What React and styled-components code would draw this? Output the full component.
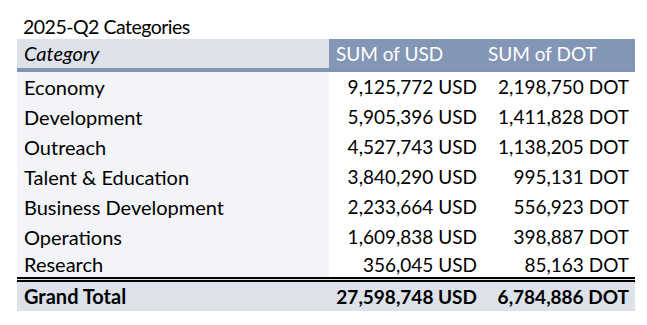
import styled, { createGlobalStyle } from "styled-components";

const GlobalStyle = createGlobalStyle`
  body {
    margin: 0;
    background: #ffffff;
    font-family: Lato, "Open Sans", sans-serif;
    color: #000000;
  }
`;

const Sheet = styled.div`
  padding-left: 17px;
  width: 618px;
`;

const Title = styled.div`
  margin-top: 15px;
  height: 24px;
  line-height: 24px;
  padding-left: 6px;
  font-size: 19.5px;
  letter-spacing: -0.5px;
`;

const Table = styled.div`
  display: grid;
  grid-template-columns: 312px 152px 154px;
`;

const HeadCell = styled.div`
  height: 29px;
  line-height: 29px;
  font-size: ${({ dark }) => (dark ? 19 : 20)}px;
  padding: 0 7px;
  background: ${({ dark }) => (dark ? "#8496b5" : "#dde2ea")};
  color: ${({ dark }) => (dark ? "#ffffff" : "#000000")};
  font-style: ${({ dark }) => (dark ? "normal" : "italic")};
`;

const Band = styled.div`
  grid-column: 1 / -1;
  height: 4px;
  background: #8394b3;
`;

const Cell = styled.div`
  height: ${({ short }) => (short ? 25 : 30)}px;
  line-height: ${({ short }) => (short ? 25 : 30)}px;
  font-size: ${({ label }) => (label ? 20 : 19)}px;
  white-space: nowrap;
  background: ${({ label }) => (label ? "#f3f4f7" : "#ffffff")};
  text-align: ${({ label }) => (label ? "left" : "right")};
  padding: ${({ label, last }) =>
    label ? "0 0 0 7px" : last ? "0 6px 0 0" : "0 4px 0 0"};
`;

const TotalCell = styled.div`
  height: 29px;
  line-height: 29px;
  font-size: ${({ label }) => (label ? 20 : 19)}px;
  font-weight: 700;
  white-space: nowrap;
  background: #dde2ea;
  border-top: 5px double #000000;
  text-align: ${({ label }) => (label ? "left" : "right")};
  padding: ${({ label, last }) =>
    label ? "0 0 0 7px" : last ? "0 6px 0 0" : "0 4px 0 0"};
`;

const rows = [
  ["Economy", "9,125,772", "2,198,750"],
  ["Development", "5,905,396", "1,411,828"],
  ["Outreach", "4,527,743", "1,138,205"],
  ["Talent & Education", "3,840,290", "995,131"],
  ["Business Development", "2,233,664", "556,923"],
  ["Operations", "1,609,838", "398,887"],
  ["Research", "356,045", "85,163"],
];

const App = () => {
  return (
    <Sheet>
      <GlobalStyle />
      <Title>2025-Q2 Categories</Title>
      <Table>
        <HeadCell>Category</HeadCell>
        <HeadCell dark>SUM of USD</HeadCell>
        <HeadCell dark>SUM of DOT</HeadCell>
        <Band />
        {rows.map(([name, usd, dot], i) => {
          const short = i === rows.length - 1;
          return [
            <Cell key={name} label short={short}>
              {name}
            </Cell>,
            <Cell key={name + "u"} short={short}>
              {usd} USD
            </Cell>,
            <Cell key={name + "d"} last short={short}>
              {dot} DOT
            </Cell>,
          ];
        })}
        <TotalCell label>Grand Total</TotalCell>
        <TotalCell>27,598,748 USD</TotalCell>
        <TotalCell last>6,784,886 DOT</TotalCell>
      </Table>
    </Sheet>
  );
};

export default App;
